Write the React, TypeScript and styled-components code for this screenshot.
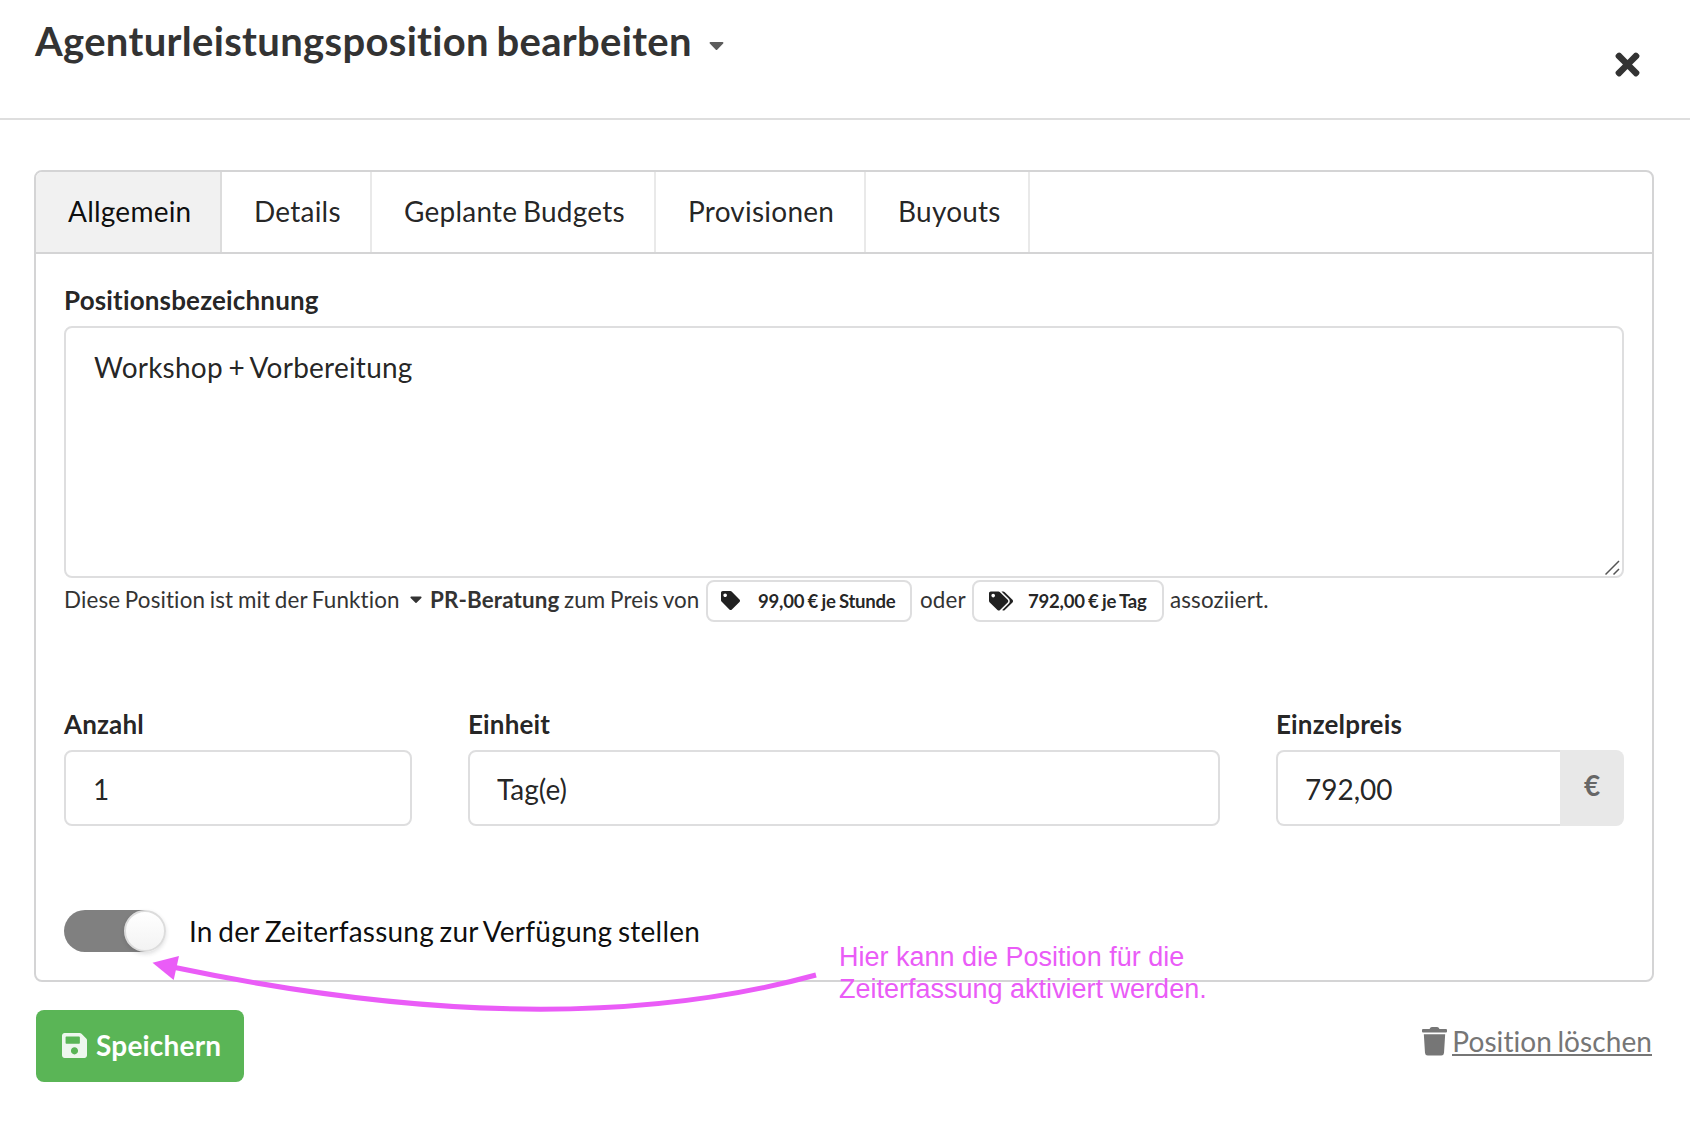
import React from 'react';
import styled, { createGlobalStyle, css } from 'styled-components';
import { FaCaretDown, FaSave, FaTag, FaTags, FaTimes } from 'react-icons/fa';

const GlobalStyle = createGlobalStyle`
  *, *::before, *::after { box-sizing: border-box; }
  body {
    margin: 0;
    background: #fff;
    color: rgba(0, 0, 0, 0.87);
    font-family: Lato, 'Liberation Sans', sans-serif;
    font-size: 28px;
    line-height: 36px;
    letter-spacing: 0.23px;
    word-spacing: -1.8px;
    font-variant-ligatures: none;
  }
  svg { display: block; }
`;

const Modal = styled.div`
  position: relative;
  width: 1690px;
  height: 1132px;
  overflow: hidden;
`;

const Header = styled.header`
  display: flex;
  align-items: flex-start;
  height: 120px;
  padding: 16px 45px 0 35px;
  border-bottom: 2px solid #dedede;
`;

const Title = styled.h1`
  margin: 0;
  font-size: 40px;
  line-height: 51px;
  font-weight: 700;
  letter-spacing: 0.32px;
  word-spacing: -2.5px;
  color: #333;
`;

const TitleCaret = styled(FaCaretDown)`
  margin: 14px 0 0 17px;
  width: 15px;
  height: 30px;
  color: #5c5c5c;
`;

const CloseButton = styled.button`
  margin: 29px 0 0 auto;
  padding: 0;
  width: 35px;
  height: 38px;
  display: grid;
  place-items: center;
  border: 0;
  background: none;
  color: #333;
`;

const Main = styled.main`
  padding: 50px 36px 0 34px;
`;

const Panel = styled.section`
  height: 812px;
  border: 2px solid #d4d4d5;
  border-radius: 8px;
  overflow: hidden;
`;

const Tabs = styled.nav`
  display: flex;
  height: 82px;
  border-bottom: 2px solid #d4d4d5;
`;

const Tab = styled.a<{ $width: number; $active?: boolean }>`
  width: ${p => p.$width}px;
  padding: 21px 0 0 32px;
  border-right: 2px solid ${p => (p.$active ? '#dcdcdc' : '#e9e9e9')};
  white-space: nowrap;
  ${p => p.$active && css`
    background: #f1f1f1;
    color: rgba(0, 0, 0, 0.95);
  `}
`;

const Form = styled.form`
  padding: 29px 28px 0;
`;

const Label = styled.label`
  display: block;
  height: 43px;
  font-size: 26px;
  line-height: 35px;
  font-weight: 700;
  letter-spacing: 0.16px;
`;

const boxed = css`
  border: 2px solid #dededf;
  border-radius: 8px;
  background: #fff;
`;

const TextAreaWrap = styled.div`
  display: grid;
`;

const TextArea = styled.textarea`
  ${boxed}
  grid-area: 1 / 1;
  display: block;
  width: 100%;
  height: 252px;
  padding: 21px 28px;
  outline: 0;
  resize: none;
  color: inherit;
  font: inherit;
  letter-spacing: inherit;
  word-spacing: inherit;
`;

const ResizeGrip = styled.svg`
  grid-area: 1 / 1;
  place-self: end;
  margin: 0 3px 2px 0;
  pointer-events: none;
`;

const Hint = styled.div`
  display: flex;
  align-items: center;
  height: 42px;
  margin-top: 2px;
  font-size: 22.4px;
  line-height: 30px;
  letter-spacing: 0.13px;
  word-spacing: -1.2px;
  color: #333;
  white-space: nowrap;
`;

const HintText = styled.span<{ $width: number; $indent?: number }>`
  width: ${p => p.$width}px;
  padding: 0 0 2px ${p => p.$indent ?? 0}px;
`;

const FunctionName = styled.b`
  width: 133px;
  padding-bottom: 2px;
`;

const HintCaret = styled(FaCaretDown)`
  width: 12px;
  height: 20px;
  margin: 0 8px 4px 0;
`;

const PriceButton = styled.button<{ $width: number; $gap: number; $inset: number }>`
  ${boxed}
  display: flex;
  align-items: center;
  gap: ${p => p.$gap}px;
  width: ${p => p.$width}px;
  height: 42px;
  padding: 0 0 1px ${p => p.$inset}px;
  color: rgba(0, 0, 0, 0.87);
  font: 700 18.6px/24px Lato, 'Liberation Sans', sans-serif;
  letter-spacing: -0.26px;
  word-spacing: -0.9px;
  white-space: nowrap;
`;

const Fields = styled.div`
  display: grid;
  grid-template-columns: 348px 752px 348px;
  gap: 56px;
  margin-top: 85px;
`;

const Field = styled.div``;

const InputGroup = styled.div`
  display: flex;
`;

const Input = styled.input<{ $joined?: boolean }>`
  ${boxed}
  flex: 1;
  min-width: 0;
  height: 76px;
  padding: 1px 27px 0;
  outline: 0;
  color: inherit;
  font: inherit;
  ${p => p.$joined && css`
    border-right: 0;
    border-radius: 8px 0 0 8px;
  `}
`;

const Unit = styled.div`
  width: 64px;
  padding: 17px 0 0 24px;
  border-radius: 0 8px 8px 0;
  background: #e8e8e8;
  color: #666;
  font-weight: 700;
`;

const ToggleRow = styled.div`
  display: flex;
  align-items: center;
  gap: 23px;
  height: 42px;
  margin-top: 84px;
  color: rgba(0, 0, 0, 0.95);
`;

const Track = styled.span`
  display: flex;
  justify-content: flex-end;
  width: 102px;
  height: 42px;
  border-radius: 21px;
  background: linear-gradient(90deg, #808080 81px, transparent 81px);
`;

const Knob = styled.span`
  width: 42px;
  height: 42px;
  border: 2px solid #dcdcdc;
  border-radius: 50%;
  background: linear-gradient(#fff, #f3f3f3);
  box-shadow: 0 2px 4px rgba(34, 36, 38, 0.15);
`;

const Actions = styled.footer`
  display: flex;
  justify-content: space-between;
  align-items: flex-start;
  padding: 28px 2px 0;
`;

const SaveButton = styled.button`
  display: flex;
  align-items: center;
  gap: 9px;
  width: 208px;
  height: 72px;
  padding: 0 0 2px 26px;
  border: 0;
  border-radius: 8px;
  background: #5ab556;
  color: #fff;
  font: 700 28px/36px Lato, 'Liberation Sans', sans-serif;
  letter-spacing: 0.2px;
`;

const SaveIcon = styled(FaSave)`
  width: 25px;
  height: 29px;
  opacity: 0.9;
`;

const DeleteLink = styled.a`
  display: flex;
  align-items: flex-start;
  gap: 5px;
  padding-top: 14px;
  color: #767676;
`;

const DeleteText = styled.span`
  height: 32px;
  border-bottom: 2px solid #767676;
  line-height: 35px;
  letter-spacing: 0.08px;
  white-space: nowrap;
`;

const TrashIcon = styled.svg`
  margin-top: 3px;
`;

const Arrow = styled.svg`
  position: absolute;
  left: 140px;
  top: 950px;
`;

const Note = styled.p`
  position: absolute;
  left: 839px;
  top: 941px;
  margin: 0;
  color: #ea5cf7;
  font: 27px/32px 'Liberation Sans', Arial, sans-serif;
  letter-spacing: 0;
  word-spacing: 0;
  white-space: pre;
`;

const tabs = [
  { name: 'Allgemein', width: 186 },
  { name: 'Details', width: 150 },
  { name: 'Geplante Budgets', width: 284 },
  { name: 'Provisionen', width: 210 },
  { name: 'Buyouts', width: 164 },
];

export default function App() {
  return (
    <>
      <GlobalStyle />
      <Modal>
        <Header>
          <Title>Agenturleistungsposition bearbeiten</Title>
          <TitleCaret />
          <CloseButton type="button" aria-label="Schließen"><FaTimes size={35} /></CloseButton>
        </Header>
        <Main>
          <Panel>
            <Tabs>
              {tabs.map((tab, i) => (
                <Tab key={tab.name} $width={tab.width} $active={i === 0}>{tab.name}</Tab>
              ))}
            </Tabs>
            <Form>
              <Label>Positionsbezeichnung</Label>
              <TextAreaWrap>
                <TextArea defaultValue="Workshop + Vorbereitung" spellCheck={false} />
                <ResizeGrip width="16" height="16" viewBox="0 0 16 16" stroke="#555" strokeWidth="1.5">
                  <path d="M0.5 14.5 14 1M8.5 14.5 14 9" />
                </ResizeGrip>
              </TextAreaWrap>
              <Hint>
                <HintText $width={346}>Diese Position ist mit der Funktion</HintText>
                <HintCaret />
                <FunctionName>PR-Beratung</FunctionName>
                <HintText $width={143} $indent={1}>zum Preis von</HintText>
                <PriceButton type="button" $width={206} $gap={18} $inset={13}><FaTag size={19} />99,00 € je Stunde</PriceButton>
                <HintText $width={60} $indent={8}>oder</HintText>
                <PriceButton type="button" $width={192} $gap={15} $inset={15}><FaTags size={24} />792,00 € je Tag</PriceButton>
                <HintText $width={110} $indent={6}>assoziiert.</HintText>
              </Hint>
              <Fields>
                <Field>
                  <Label>Anzahl</Label>
                  <InputGroup><Input defaultValue="1" /></InputGroup>
                </Field>
                <Field>
                  <Label>Einheit</Label>
                  <InputGroup><Input defaultValue="Tag(e)" /></InputGroup>
                </Field>
                <Field>
                  <Label>Einzelpreis</Label>
                  <InputGroup>
                    <Input $joined defaultValue="792,00" />
                    <Unit>€</Unit>
                  </InputGroup>
                </Field>
              </Fields>
              <ToggleRow>
                <Track><Knob /></Track>
                In der Zeiterfassung zur Verfügung stellen
              </ToggleRow>
            </Form>
          </Panel>
          <Actions>
            <SaveButton type="button"><SaveIcon />Speichern</SaveButton>
            <DeleteLink>
              <TrashIcon width="25" height="29" viewBox="0 0 25 29" fill="currentColor">
                <path d="M1 2H7.5L8.5 .6Q9 0 10 0H15Q16 0 16.5 .6L17.5 2H24Q25 2 25 3V4.600Q25 5.500 24 5.500H1Q0 5.500 0 4.600V3Q0 2 1 2Z" />
                <path d="M1.800 7.300H23.200L22 26Q21.700 28.600 19.300 28.600H5.700Q3.300 28.600 3 26Z" />
              </TrashIcon>
              <DeleteText>Position löschen</DeleteText>
            </DeleteLink>
          </Actions>
        </Main>
        <Arrow width="690" height="70" viewBox="140 950 690 70">
          <path d="M175 967.500Q554 1047 816 975" fill="none" stroke="#ea5cf7" strokeWidth="5" />
          <path d="M152.500 962.700 179 956 173.700 980Z" fill="#ea5cf7" />
        </Arrow>
        <Note>{'Hier kann die Position für die\nZeiterfassung aktiviert werden.'}</Note>
      </Modal>
    </>
  );
}
